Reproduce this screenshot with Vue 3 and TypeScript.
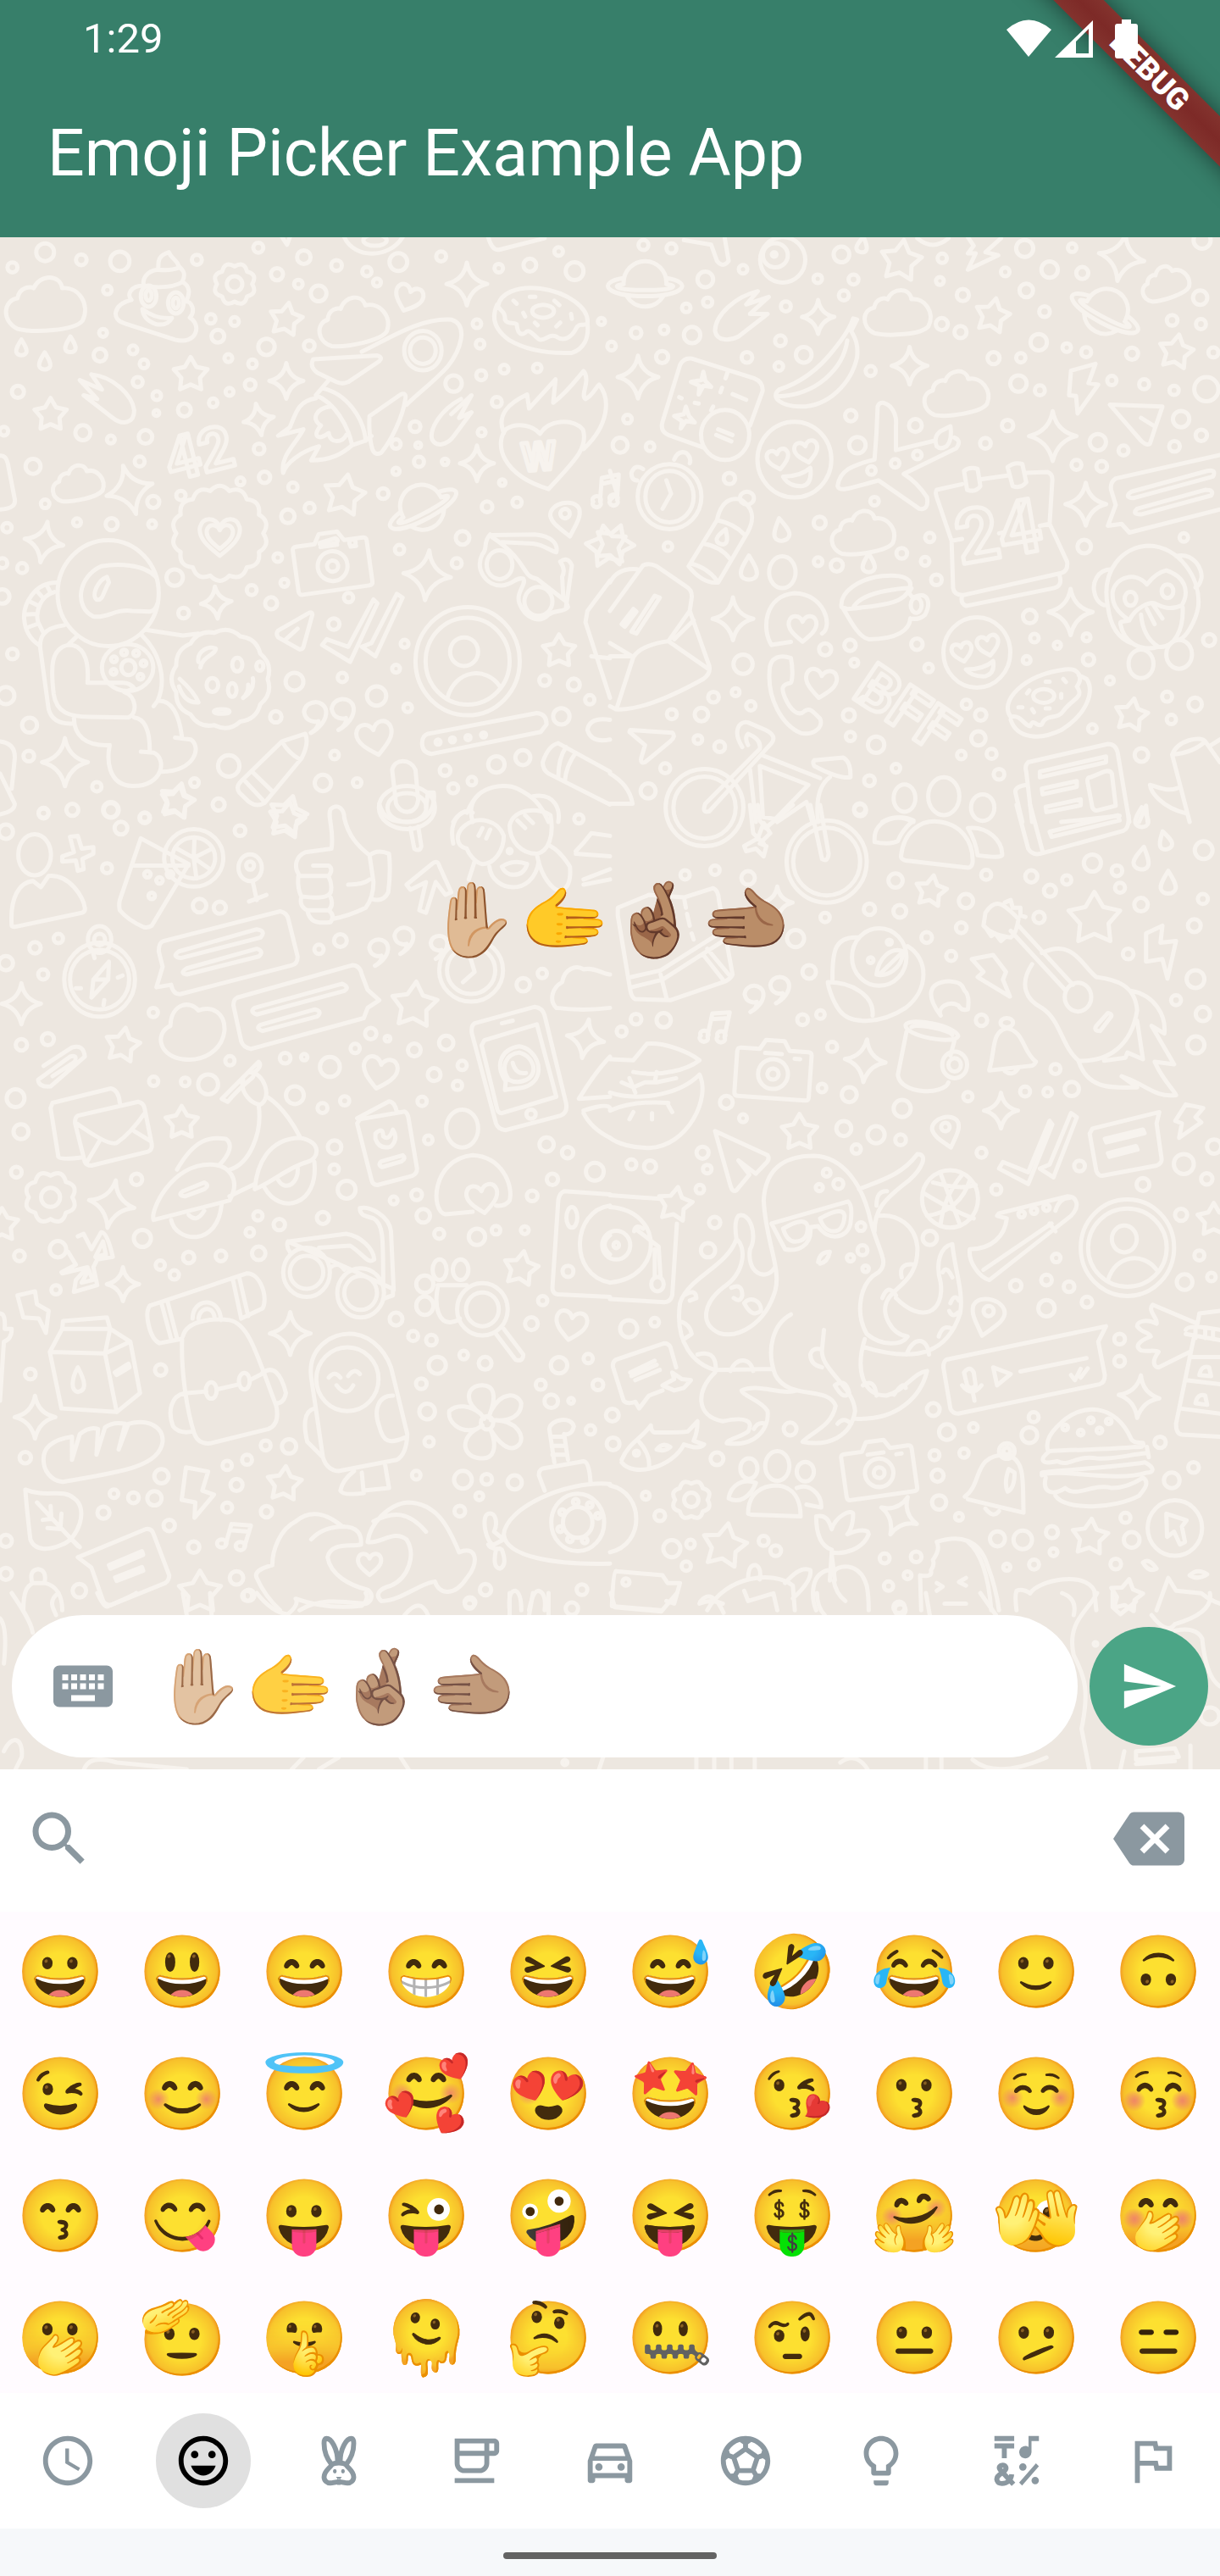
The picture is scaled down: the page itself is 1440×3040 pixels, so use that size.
<script setup lang="ts">
import { ref } from 'vue'

type Item = [shape: string, x: number, y: number, size: number, turn?: number]
interface Panel {
  frame: [x: number, y: number, sx: number, sy: number]
  dots: number[]
  ovals: number[]
  items: Item[]
  lines: string
}

const message = ref('✋🏼🫱🤞🏽🫲🏽')
const query = ref(message.value)
const activeTab = ref('Smileys')

const emojis: string[] = [
  '😀', '😃', '😄', '😁', '😆', '😅', '🤣', '😂', '🙂', '🙃',
  '😉', '😊', '😇', '🥰', '😍', '🤩', '😘', '😗', '☺️', '😚',
  '😙', '😋', '😛', '😜', '🤪', '😝', '🤑', '🤗', '🫣', '🤭',
  '🫢', '🫡', '🤫', '🫠', '🤔', '🤐', '🤨', '😐', '🫤', '😑',
]

const tabs: { name: string; fill?: string; stroke?: string }[] = [
  { name: 'Recent', fill: 'M12 2C6.48 2 2 6.48 2 12s4.48 10 10 10 10-4.48 10-10S17.52 2 12 2zm0 18c-4.42 0-8-3.58-8-8s3.58-8 8-8 8 3.58 8 8-3.58 8-8 8zM12.5 7H11v6l5.25 3.15.75-1.23-4.5-2.67z' },
  { name: 'Smileys', fill: 'M12 2C6.47 2 2 6.48 2 12s4.47 10 10 10 10-4.48 10-10S17.52 2 12 2zm0 18c-4.42 0-8-3.58-8-8s3.58-8 8-8 8 3.58 8 8-3.58 8-8 8zM12 18c2.28 0 4.22-1.66 5-4H7c.78 2.34 2.72 4 5 4zM7 9.5a1.5 1.5 0 1 1 3 0a1.5 1.5 0 1 1-3 0zM14 9.5a1.5 1.5 0 1 1 3 0a1.5 1.5 0 1 1-3 0z' },
  { name: 'Animals', fill: 'M9.6 16.2a.75.9 0 1 1 1.5 0a.75.9 0 1 1-1.5 0zM12.9 16.2a.75.9 0 1 1 1.5 0a.75.9 0 1 1-1.5 0zM10.8 18.5h2.4L12 20zM11.3 19.4h1.4v2.4h-1.4z', stroke: 'M9.1 13.6C7.3 11.4 6 8.2 6 5C6 3.6 6.4 3 7 3C8.9 3 11.5 7 11.5 12.5M14.9 13.6C16.7 11.4 18 8.2 18 5C18 3.6 17.6 3 17 3C15.1 3 12.5 7 12.5 12.5M8.9 13.9C8 15.2 6 16.3 6 18.6C6 20 7.2 21 8.5 21C9.7 21 10.6 20.5 12 20.5C13.4 20.5 14.3 21 15.5 21C16.8 21 18 20 18 18.6C18 16.3 16 15.2 15.1 13.9C14 12.5 10 12.5 8.9 13.9Z' },
  { name: 'Food', fill: 'M4 19h16v2H4zM20 3H4v10c0 2.21 1.79 4 4 4h6c2.21 0 4-1.79 4-4v-3h2c1.11 0 2-.89 2-2V5c0-1.11-.89-2-2-2zm-4 10c0 1.1-.9 2-2 2H8c-1.1 0-2-.9-2-2v-3h10v3zm0-5H6V5h10v3zm4 0h-2V5h2v3z' },
  { name: 'Travel', fill: 'M18.92 6.01C18.72 5.42 18.16 5 17.5 5h-11c-.66 0-1.21.42-1.42 1.01L3 12v8c0 .55.45 1 1 1h1c.55 0 1-.45 1-1v-1h12v1c0 .55.45 1 1 1h1c.55 0 1-.45 1-1v-8l-2.08-5.99zM6.85 7h10.29l1.08 3.11H5.77L6.85 7zM19 17H5v-5h14v5zM6 14.5a1.5 1.5 0 1 1 3 0a1.5 1.5 0 1 1-3 0zM15 14.5a1.5 1.5 0 1 1 3 0a1.5 1.5 0 1 1-3 0z' },
  { name: 'Activities', fill: 'M12 2C6.48 2 2 6.48 2 12s4.48 10 10 10 10-4.48 10-10S17.52 2 12 2zm1 3.3l1.35-.95c1.82.56 3.37 1.76 4.38 3.34l-.39 1.34-1.35.46L13 6.7V5.3zm-3.35-.95L11 5.3v1.4L7.01 9.49l-1.35-.46-.39-1.34c1.01-1.57 2.56-2.77 4.38-3.34zM7.08 17.11l-1.14.1C4.73 15.81 4 13.99 4 12c0-.12.01-.23.02-.35l1-.73 1.38.48 1.46 4.34-.78 1.37zm7.42 2.48c-.79.26-1.63.41-2.5.41s-1.71-.15-2.5-.41l-.69-1.49.64-1.1h5.11l.64 1.11-.7 1.48zM14.27 15H9.73l-1.35-4.02L12 8.44l3.63 2.54L14.27 15zm3.79 2.21l-1.14-.1-.79-1.37 1.46-4.34 1.39-.47 1 .73c.01.11.02.22.02.34 0 1.99-.73 3.81-1.94 5.21z' },
  { name: 'Objects', fill: 'M9 21c0 .5.4 1 1 1h4c.6 0 1-.5 1-1v-1H9v1zm3-19C8.1 2 5 5.1 5 9c0 2.4 1.2 4.5 3 5.7V17c0 .5.4 1 1 1h6c.6 0 1-.5 1-1v-2.3c1.8-1.3 3-3.4 3-5.7 0-3.9-3.1-7-7-7zm2.9 11.1l-.9.6V16h-4v-2.3l-.8-.6C7.8 12.2 7 10.6 7 9c0-2.8 2.2-5 5-5s5 2.2 5 5c0 1.6-.8 3.2-2.1 4.1z' },
  { name: 'Symbols', fill: 'M3 2h8v2H3zM6 11h2V7h3V5H3v2h3zM21 4h-3v4.6A2.5 2.5 0 1 1 16.8 6.4V2H21zM13 14.5a1.5 1.5 0 1 1 3 0a1.5 1.5 0 1 1-3 0zM18 20a1.5 1.5 0 1 1 3 0a1.5 1.5 0 1 1-3 0zM19.8 13l1.2 1.2-6.8 7.8-1.2-1.2z', stroke: 'M10.7 21.5L5.3 15.6C4.5 14.5 5.3 13.8 6.3 13.8C7.6 13.8 8.1 15 7.3 15.9L5 17.7C3 19.3 4.2 21.2 6 21.2C8.3 21.2 9.8 19.6 10 17.5' },
  { name: 'Flags', fill: 'M12.36 6l.08.39.32 1.61H18v6h-3.36l-.32-1.61-.08-.39H7V6h5.36M14 4H5v17h2v-7h5.6l.4 2h7V6h-5.6L14 4z' },
]

/** Closed outline that alternates between two radii. */
function ring(points: number, outer: number, inner: number): string {
  const step = Math.PI / points
  const parts: string[] = []
  for (let i = 0; i < points * 2; i++) {
    const r = i % 2 ? inner : outer
    const a = i * step - Math.PI / 2
    parts.push(`${(Math.cos(a) * r).toFixed(1)} ${(Math.sin(a) * r).toFixed(1)}`)
  }
  return `M${parts.join('L')}Z`
}

/** Circle with rounded bumps along its edge. */
function bumps(count: number, radius: number, bulge: number): string {
  const at = (i: number, r: number) => {
    const a = (i * 2 * Math.PI) / count
    return `${(Math.cos(a) * r).toFixed(1)} ${(Math.sin(a) * r).toFixed(1)}`
  }
  let d = `M${at(0, radius)}`
  for (let i = 0; i < count; i++) d += `Q${at(i + 0.5, bulge)} ${at(i + 1, radius)}`
  return d + 'Z'
}

function oval(r: number, ry = r): string {
  return `M${-r} 0a${r} ${ry} 0 1 1 ${r * 2} 0a${r} ${ry} 0 1 1 ${-r * 2} 0Z`
}

const shapes: Record<string, string> = {
  star: ring(5, 20, 11),
  spark: 'M0-21Q3-4 20 0Q4 4 0 21Q-4 4-20 0Q-3-4 0-21Z',
  heart: 'M0 18C-10 10-20 2-18-8C-15-18-4-17 0-8C4-17 15-18 18-8C20 2 10 10 0 18Z',
  cloud: 'M-14 12C-22 8-21-2-14-3C-13-9-7-9-6-8C-3-15 7-15 8-8C16-9 22 0 18 8C14 13-6 14-14 12Z',
  planet: 'M-14-2A14 14 0 0 1 14-2M-12 7A14 14 0 0 0 12 7M-14-5C-32-2-26 7 0 7S32-2 14-5M-14-1C-22 0-20 3 0 3S22 0 14-1',
  camera: 'M-18-10H-8L-5-15H5L8-10H18Q20-10 20-8V14Q20 16 18 16H-18Q-20 16-20 14V-8Q-20-10-18-10ZM-8 3A8 8 0 1 1 8 3A8 8 0 1 1-8 3M-3 3A3 3 0 1 1 3 3A3 3 0 1 1-3 3M-5-8H4M11-6H14',
  gear: bumps(8, 16, 23) + oval(7),
  drop: 'M0-18C8-5 12 2 11 8C9 18-9 18-11 8C-12 2-8-5 0-18Z',
  pin: 'M0 20C-10 8-16 2-16-6C-14-20 14-20 16-6C16 2 10 8 0 20ZM-5-5A5 5 0 1 1 5-5A5 5 0 1 1-5-5',
  quote: 'M-6 20C5 14 13 4 12-6C10-20-12-20-14-5C-12 8 0 7 3 6Q4 14-6 20Z',
  note: 'M-8 12L-6-14L14-18L12 10M-6-7L13-11M-16 14A5 4 0 1 1-8 14A5 4 0 1 1-16 14M4 12A5 4 0 1 1 12 12A5 4 0 1 1 4 12',
  badge: bumps(14, 19, 23),
  moon: bumps(11, 19, 22),
}

const panels: Panel[] = [
  {
    frame: [0, 270, 0.45918, 0.44643],
    dots: [32,102,14,116,62,25,209,82,15,308,86,27,276,162,12,265,275,11,257,334,18,342,320,12,370,357,12,354,405,14,403,441,12,402,487,8,46,431,17,213,539,21,285,557,11,374,550,19,10,535,12,85,628,21,359,615,14,116,727,12,394,722,17,18,790,13,198,776,11,287,781,17,391,781,11,465,705,13,506,82,14,542,238,13,603,245,12,560,284,18,685,312,23,587,342,11,649,357,12,643,412,15,590,431,11,548,460,12,474,479,18,666,582,15,680,657,16,618,668,11,753,683,13,740,760,19,796,738,14,664,50,14,712,120,17,767,146,12,781,75,19,819,171,22,865,97,15,943,113,13,969,142,11,1024,88,25,1134,73,14,1226,251,12,1234,305,12,1282,104,12,1362,96,18,1436,60,12,1477,112,25,1546,245,10,1166,409,23,1237,387,14,1296,371,12,1381,368,12,1277,458,14,1067,523,15,1018,569,13,1075,572,8,1077,616,14,1144,616,9,1018,641,10,1238,538,11,985,700,15,1291,671,9,1252,735,15,1329,723,13,1189,817,19,1174,884,14,1027,848,13,714,869,12,449,922,23,472,1016,15,57,897,14,6,884,14,6,972,20,647,955,14,697,990,17,731,936,11,896,975,13,858,1045,16,1040,1097,11,1018,1163,11,32,1124,15,15,1234,24,76,1312,21,74,1394,15,757,1197,25,880,1186,13,968,1235,27,1048,1266,12,709,1290,16,588,1420,30,860,1391,12,830,1465,23,918,1464,12,500,1464,12,562,1522,17,249,1475,13,186,1536,17,112,1546,14,285,1536,22,372,1556,13,1400,1194,15,1475,1205,17,1516,1245,13,1443,1289,23,1344,1398,21,1276,1416,23,1144,1432,15,1213,1460,12,1165,1479,14,795,309,15,1126,1357,7,1163,1351,7,1203,1345,7,1243,1338,7,319,1120,8,350,1122,8,369,1149,8,361,1184,8,293,1138,8,292,1171,8,906,830,9],
    ovals: [382,178,20,28,452,196,20,28,382,176,8,14,452,196,8,14,1396,218,28,17,1087,322,48,52,1087,322,33,35,1284,888,33,38,1384,985,36,38,278,963,130,140,328,1160,66,62,330,1160,18,20,610,1152,13,18,546,1206,15,18,597,1219,11,18,668,1156,9,12,570,1276,20,6,1202,1143,134,143,1202,1143,108,115,1193,1118,36,38,964,30,30,15],
    items: [['star',490,386,21],['star',130,492,20],['star',735,240,20,10],['star',885,705,25,10],['star',1437,1117,20],['star',455,1512,21,15],['star',740,1550,23,15],['star',1560,840,25,-10],['spark',1200,146,24],['spark',736,402,20],['spark',665,504,18,-10],['spark',1226,620,20],['spark',333,690,28,-15],['spark',113,828,23,10],['spark',556,988,18,-5],['spark',1098,916,28,5],['spark',167,1410,27],['heart',1050,182,18,20],['heart',964,1345,23,-12],['cloud',118,200,48],['cloud',908,245,42,-8],['cloud',200,672,31,-8],['gear',603,146,26],['planet',1087,740,36,-28],['badge',565,805,54],['heart',565,812,26],['heart',565,812,17],['camera',853,877,44,-8],['pin',1455,765,22,-12],['moon',568,1190,58],['quote',812,1288,20],['quote',883,1280,20],['note',1560,690,20],['drop',55,315,11],['drop',115,351,12],['drop',181,307,11]],
    lines: 'M434 62C395 75 412 100 405 108C375 112 365 135 370 150C335 150 325 175 338 188C290 200 285 240 320 250L450 293C505 308 520 255 488 235C505 215 490 190 478 192C490 170 488 150 468 140C482 115 465 105 460 100C455 80 440 80 434 62ZM372 152Q440 160 470 140M405 108Q440 112 462 102M366 212Q400 240 442 236Q430 258 400 252Q368 240 366 212ZM1280 205C1285 170 1330 150 1390 158C1460 168 1515 210 1510 250C1500 260 1490 245 1480 265C1470 285 1450 300 1430 285C1410 275 1400 300 1385 292C1370 280 1360 262 1350 275C1335 285 1330 270 1328 252C1318 245 1305 255 1298 240C1300 220 1285 215 1280 205ZM1278 200C1260 240 1275 270 1310 295C1360 325 1420 330 1470 328C1500 318 1515 290 1510 250M1320 190L1328 198M1362 180H1376M1425 190L1438 202M1345 222L1350 232M1440 248L1430 258M1468 225L1470 238M1375 248L1382 255M930 325C1000 290 1080 235 1160 240C1205 255 1185 320 1150 365C1120 400 1080 430 1045 465M805 345L970 335Q985 340 975 350L895 405Q880 412 865 405L815 380Q795 365 805 345ZM845 400L812 440M830 422C890 435 935 500 940 560L905 572C895 520 860 460 812 440M940 560L955 548M950 495L1030 438Q1045 432 1042 450C1035 500 1005 560 980 592Q965 600 958 585C950 560 948 520 950 495ZM812 448C765 455 760 490 745 525L715 547L780 530C760 570 720 600 728 645C735 620 770 590 820 575L800 612C850 612 880 595 905 572M850 470C810 475 800 505 825 520C800 550 820 560 845 540C850 570 880 565 890 545M235 385C290 390 340 440 345 480C345 515 315 520 290 500L215 440L250 450L205 400L262 425L235 385M1185 450C1130 480 1105 530 1110 555C1120 580 1150 570 1165 550L1212 485L1180 500L1212 440L1160 490M1410 688C1290 650 1270 570 1300 530C1330 510 1370 520 1388 542C1410 505 1470 500 1498 530C1515 580 1470 620 1410 688ZM1295 540C1275 490 1310 460 1355 438L1360 475L1428 398L1422 460C1460 430 1480 400 1500 376C1520 400 1490 440 1505 450C1525 440 1530 420 1540 412C1570 450 1565 520 1500 582M822 830L862 818Q872 822 865 830L830 838Q820 836 822 830ZM1265 810L1375 808C1420 812 1435 835 1430 855C1410 850 1400 835 1370 832L1290 828M1260 808C1240 830 1255 845 1240 860C1220 900 1250 945 1290 943C1320 940 1325 920 1345 925C1355 940 1325 960 1335 990C1350 1030 1385 1045 1410 1020C1430 1005 1450 1015 1460 1000L1455 985L1380 925C1340 920 1360 880 1265 815M1455 1000L1470 890Q1460 865 1440 880Q1455 900 1445 920L1448 975M400 920C370 885 300 885 260 892C200 920 190 1000 240 1025C280 1030 290 1005 340 1010L385 1012Q400 1010 405 990M275 920C250 930 235 970 248 980C265 985 265 960 280 935ZM145 935C90 935 60 990 62 1030C65 1070 85 1090 100 1100M140 960C105 970 90 1010 98 1040L110 1065M120 942L130 962M95 958L110 975M76 985L96 995M64 1020L92 1018M68 1055L95 1045M165 1048C110 1055 98 1080 105 1120L125 1270Q135 1310 185 1308M225 1200C230 1130 210 1100 175 1100C130 1110 130 1160 138 1230C145 1280 180 1290 230 1290L330 1292C355 1280 350 1235 320 1225L345 1215Q335 1200 315 1200ZM175 1100L195 1080M190 1292C190 1340 220 1368 282 1365C275 1400 275 1470 340 1473C420 1475 430 1400 395 1385L362 1382M385 1380C385 1320 370 1295 345 1292M415 1435C500 1435 520 1370 490 1350L450 1345M468 1345C460 1280 440 1245 405 1248L395 1262M365 1075C410 1120 430 1190 405 1248M375 1060L470 1075L510 1070M510 1145C505 1115 540 1100 555 1110C555 1125 520 1130 515 1160M462 1190Q500 1225 510 1252Q475 1255 460 1210M650 1188Q655 1220 625 1240Q640 1225 638 1205M795 1015L715 1062Q708 1070 715 1080L770 1112Q778 1112 780 1105L803 1020Q803 1012 795 1015ZM765 1057L735 1085M960 980L895 1105L840 1085L828 1100L900 1145L970 990ZM1020 965L955 1095L930 1105L965 1130L1035 975ZM1150 1240C1170 1165 1250 1155 1285 1210M1100 1335L1380 1280Q1405 1282 1405 1310L1390 1330L1110 1388Q1085 1385 1085 1360Q1085 1340 1100 1335ZM725 1355L785 1335Q795 1360 775 1400L680 1518Q660 1530 640 1515L615 1490Q605 1475 620 1460ZM725 1355Q740 1385 770 1402M650 1437L700 1487M630 1460L680 1515M1008 1430C1015 1400 1055 1400 1068 1430L1075 1510C1070 1550 1030 1550 1018 1520ZM975 1520C985 1560 1010 1568 1050 1568C1100 1568 1120 1530 1115 1490L1100 1490L1095 1530M1435 1360L1568 1435M1435 1360Q1410 1365 1395 1410Q1395 1430 1410 1440L1568 1522M1455 1370Q1435 1400 1435 1450M1480 1385Q1455 1420 1452 1460M1215 1568C1190 1480 1290 1460 1330 1480C1370 1500 1390 1520 1410 1568M1370 1500C1430 1490 1440 1540 1435 1568M1165 1568Q1185 1535 1210 1540M0 600Q15 598 20 620L38 715Q42 740 0 742M1568 930L1510 1010L1505 1040L1568 1240M1520 1130L1568 1135M885 22C910 80 1000 80 1035 22M1255 22Q1265 60 1285 55L1400 25M725 22L738 42L745 22M0 1355Q40 1360 38 1400L30 1480M0 1440L38 1520Q38 1540 0 1548M1568 1298Q1515 1290 1510 1325Q1520 1360 1568 1350',
  },
  {
    frame: [720, 270, 0.45918, 0.44643],
    dots: [86,43,14,158,52,14,342,107,12,245,134,22,251,194,13,196,209,12,139,267,12,67,275,15,211,281,23,134,339,17,352,340,15,4,310,12,45,503,12,26,572,21,103,576,12,307,660,16,452,205,14,438,296,15,434,364,12,498,333,22,534,132,12,595,68,22,626,134,14,601,176,14,670,376,14,619,494,16,636,572,23,785,520,18,539,777,17,535,880,12,583,890,17,750,858,15,822,816,13,810,879,12,680,720,12,839,928,15,854,78,13,848,138,11,907,175,17,853,252,17,901,273,17,986,342,17,1056,341,13,1050,409,23,1105,427,14,1102,300,23,1070,163,19,1117,219,15,1066,52,24,1188,50,12,1130,108,23,1214,117,17,1016,114,12,1174,314,12,1224,326,14,1342,330,17,1290,401,13,1373,411,14,1450,427,13,1445,242,15,1519,252,14,1517,182,20,1551,327,14,1533,424,34,1468,503,23,1520,546,16,1451,575,15,1320,586,14,1254,564,23,1199,624,14,1264,628,15,1022,520,16,965,567,15,1219,840,19,1475,816,12,149,840,12,342,1151,27,553,1112,17,617,1101,16,628,1147,11,789,1098,16,819,1161,12,1079,1025,19,1091,1082,12,1150,1101,10,1071,1140,11,1225,1080,11,1230,1139,16,1540,1087,17,1285,1194,11,1432,1237,14,1504,1257,19,1443,1297,13,1240,1321,12,266,1238,15,323,1225,11,362,1261,13,235,1284,19,159,1283,14,226,1350,12,282,1369,15,142,1426,14,98,1486,21,614,1286,17,618,1342,13,684,1364,23,916,1257,13,953,1285,16,947,1347,20,981,1388,14,903,1391,12,735,1426,12,1000,1442,15,667,1459,15,642,1534,16,1366,1391,19,1522,30,24,672,639,12,733,620,12,790,598,12],
    ovals: [444,82,58,60,425,70,32,32,422,68,6,6,296,545,62,66,474,610,95,100,153,708,82,86,153,708,62,68,352,712,18,17,1338,978,15,18,1433,958,15,18,1365,1150,32,38,1463,1125,33,38,443,908,34,42,787,995,14,20,943,1120,86,93,1115,1235,27,18,243,1530,100,102,243,1530,80,82,757,1505,28,36,858,1500,40,50,958,1530,30,35],
    items: [['star',748,85,25,8],['star',983,230,21,12],['star',1455,326,21,10],['star',1340,1286,20,10],['star',10,835,24,20],['spark',72,392,24],['spark',535,233,19],['spark',770,362,21],['spark',1138,548,28],['spark',1223,728,24],['spark',1184,1013,26],['spark',316,1031,24],['spark',1315,75,27,10],['cloud',740,222,40],['cloud',890,435,39,-5],['cloud',650,803,38,-5],['cloud',1427,143,29,-15],['heart',542,1200,20,8],['drop',440,797,16,-10],['drop',357,898,17],['drop',665,885,13],['drop',290,815,11,20],['drop',648,43,11,10],['planet',90,150,36],['planet',1273,222,36,28],['heart',432,608,14,-12],['heart',505,588,15,-12],['heart',905,1118,13,-12],['heart',972,1100,14,-12],['heart',495,1055,18]],
    lines: 'M380 165C320 180 270 230 270 270C275 300 310 295 330 285L405 225L360 225L408 180L350 200ZM190 30L260 42L275 85Q290 105 305 85L295 25M790 25Q830 60 870 25M920 22L935 45L920 65H940L920 108L998 70L965 62L1005 25M625 237Q615 270 575 320C530 380 480 410 435 425C410 445 440 470 490 470C560 470 620 410 635 340C640 300 625 280 620 270L635 240ZM610 295C600 370 530 440 430 443M360 520L392 430Q395 405 370 395L210 343Q190 340 180 360L135 510Q128 535 150 545L240 578M240 378L235 400L208 405L230 415L228 438L240 415L260 418L245 402ZM195 470L190 490L165 495L185 508L182 528L195 508L218 512L203 495ZM315 437L350 452M278 530L315 545M273 545L312 562M302 380L297 395M288 420L284 432M178 445L184 448M218 460L228 462M265 470L260 480M445 655Q490 655 515 632Q520 675 495 680Q460 682 445 655ZM145 665L157 700L135 740M165 610Q175 585 195 592Q210 605 205 620M85 635Q65 620 55 645Q55 665 70 665M275 770C285 720 310 710 335 715C365 735 375 760 355 800L278 935Q240 940 202 892ZM275 770Q320 780 345 808M240 832Q285 840 308 872M208 885Q250 895 275 930M688 470Q695 450 720 470Q738 490 735 520V585L835 560M680 610L685 540L688 470M680 610C620 625 590 640 585 680C590 695 605 690 690 665L795 740Q820 745 815 710Q790 670 755 648L890 580Q905 560 885 552M840 575Q830 550 850 535L875 522Q880 560 865 575Q850 585 840 575M840 690L905 675M955 662L1025 652M1070 645L1125 643Q1138 648 1137 665L1130 780L1175 880Q1178 905 1160 910L910 968Q885 970 882 950L878 825L840 710Q835 695 840 690M878 825L905 820M1000 805L1010 803M1105 785L1130 780M905 970Q900 990 915 997L1140 950Q1165 945 1155 915M910 640Q925 628 945 635L952 680Q940 698 918 690ZM1022 630Q1040 615 1060 622L1070 670Q1055 688 1035 680ZM1568 598L1300 660Q1285 670 1288 690L1300 730L1280 785L1315 780L1335 803L1568 742M1340 695L1535 640Q1560 635 1550 655L1345 712Q1320 710 1340 695ZM1355 740L1530 690Q1555 690 1545 705L1365 755Q1340 755 1355 740ZM1280 1000C1260 900 1320 840 1385 838C1460 840 1520 920 1512 1000C1505 1040 1480 1080 1465 1085M1340 1095C1300 1080 1285 1040 1280 1000M1290 900C1250 900 1240 940 1245 960C1250 990 1270 995 1272 995M1455 865C1500 855 1525 900 1520 925Q1515 945 1505 948M1380 940C1350 905 1300 920 1292 960C1290 990 1300 1010 1335 1035C1350 1000 1390 985 1400 990C1420 1000 1440 1010 1470 995C1490 960 1480 920 1430 903C1400 910 1385 935 1380 940ZM1335 1035C1320 1040 1310 1035 1312 1045C1320 1090 1360 1120 1410 1105C1450 1110 1475 1060 1472 1000M1395 992L1420 1030M1380 1005L1400 1045M1365 1020Q1370 1080 1410 1105M1185 375L1248 357L1230 408L1255 412L1202 488L1198 442L1180 440ZM1285 465L1420 470L1400 530L1388 568Q1380 575 1365 560ZM1365 500L1400 522M0 1010L85 890Q100 882 120 892L195 945Q212 955 210 975L205 1010L255 1155Q260 1175 240 1190C170 1230 80 1275 15 1270L0 1262M0 1130H60M0 1095L60 1132L18 1265M60 1132Q80 1100 150 1090L255 1165M150 1090L205 1010M165 1085L215 1035M115 970L55 1065L68 1070L128 975ZM60 1005L30 1045L38 1052L68 1012ZM0 935Q20 895 70 900M415 1100C390 1060 395 970 475 963C550 965 575 1050 545 1070M415 1100L465 1092M595 1000C590 960 640 925 700 918C750 912 780 925 770 950C760 985 720 995 610 1005ZM625 1002C640 970 700 955 765 950M600 1005C620 1040 640 1080 665 1085C740 1085 770 1060 772 1030M775 950L768 962L778 975C820 955 825 990 810 1020Q795 1035 772 1030M410 1170C410 1130 440 1125 465 1135C470 1160 470 1190 465 1200C440 1205 440 1215 450 1240C465 1275 485 1290 500 1275C515 1265 520 1275 540 1295C550 1320 520 1340 490 1333C440 1310 405 1240 410 1170ZM915 1165Q960 1165 985 1143Q990 1175 965 1183Q930 1185 915 1165ZM1030 1290C1000 1250 1060 1180 1170 1165C1210 1160 1215 1190 1200 1210C1220 1240 1190 1240 1165 1275C1150 1300 1120 1280 1110 1310C1095 1320 1090 1290 1080 1315C1060 1310 1060 1285 1030 1290ZM1030 1298C1045 1345 1100 1355 1160 1325C1230 1280 1245 1220 1225 1190L1205 1180M1120 1197H1130M1165 1190L1172 1198M1078 1220L1072 1228M1160 1230V1240M1050 1265H1060M1085 1270L1090 1278M1120 1268H1130M52 1325L160 1332Q170 1342 155 1355L90 1410Q78 1415 80 1400L90 1365L50 1330ZM395 1393L540 1452M340 1370C315 1330 330 1300 355 1305L400 1325Q430 1340 415 1360L255 1540Q235 1545 245 1520L385 1375Q390 1350 355 1335Q345 1345 355 1365M385 1420L510 1470L425 1560L393 1555ZM360 1430L375 1568M525 1405L600 1398Q620 1410 618 1450Q590 1455 525 1420Q520 1410 525 1405M565 1450Q525 1480 535 1568M430 1568L505 1515L520 1568M1075 1410L1280 1362Q1300 1362 1305 1385L1335 1568M1075 1410Q1065 1420 1070 1435L1085 1568M1070 1470Q1040 1475 1042 1490L1060 1568M1105 1435L1275 1395V1410L1105 1450ZM1110 1480L1200 1460V1475L1112 1495ZM1120 1528L1210 1508V1524L1122 1542ZM1235 1450Q1225 1450 1228 1465L1240 1530Q1245 1540 1255 1537L1300 1525L1290 1440Q1285 1430 1270 1435ZM1160 1568L1310 1552M1445 1390C1460 1350 1520 1340 1530 1355L1568 1410M1445 1390L1490 1568M1445 1390Q1500 1385 1530 1355M1545 1365L1568 1350M1480 1545C1420 1530 1390 1490 1388 1470C1410 1475 1430 1490 1460 1478M1360 1568L1378 1525L1382 1568M0 1440Q50 1470 58 1520H0M700 1568Q740 1545 780 1568M0 640L18 700L5 712',
  },
  {
    frame: [0, 950, 0.45918, 0.60606],
    dots: [112,15,14,15,52,20,311,45,18,372,25,15,285,10,20,617,50,15,275,123,14,513,196,19,565,200,17,90,278,16,150,260,13,15,308,20,111,330,14,820,281,13,875,264,18,394,404,13,123,456,17,55,467,16,40,571,25,54,636,21,591,498,13,733,493,15,782,491,9,848,510,28,953,445,16,913,474,13,996,455,8,1065,477,18,1147,463,20,1116,525,18,1188,507,13,1176,546,13,1345,350,19,1394,328,13,395,538,13,476,539,12,535,544,28,758,565,25,829,590,14,886,576,13,860,666,19,859,709,13,891,749,25,1101,652,12,1085,577,13,42,715,15,351,729,16,366,844,24,149,865,23,50,878,15,144,944,13,412,896,13,448,915,13,485,881,16,568,878,15,665,873,19,642,832,12,663,800,13,718,817,16,830,804,17,1012,770,11,1071,759,15,1088,800,19,1129,835,14,1226,841,23,1275,828,12,1349,828,11,1368,761,15,1405,661,20,1459,677,16,1529,714,25,1420,729,16,1018,1001,18,1395,965,13,1366,1010,18,1062,1034,14,1109,1042,15,1192,1071,12,1247,1087,18,1124,1091,24,1083,1127,15,1098,1181,22,1103,1240,13,1070,1305,12,1437,1091,23,1512,1078,13,1537,1129,15,1390,1129,14,1417,1161,19,1468,1160,8,413,1100,16,78,1108,15,65,1271,16,415,1307,20,397,1350,20,343,1349,15,293,1341,12,266,1378,17,435,1403,16,15,1433,17,15,1497,17,204,1530,19,498,1445,16,584,1368,14,608,1324,17,584,1286,13,635,1275,14,683,1247,14,743,1249,20,685,1376,16,608,1505,19,635,1540,14,1190,1314,25,1251,1313,15,1232,1346,11,1323,1319,20,1182,1375,15,1518,1217,13,1248,1528,16,1207,1556,13,1496,1528,15,1488,27,13,379,135,9,410,147,9,437,135,9,390,177,9,1480,1357,8,1516,1363,8,1537,1384,8,1445,1377,8,1440,1410,8,1465,1430,8,1503,1432,8],
    ovals: [89,97,42,40,498,103,76,56,498,103,55,40,643,122,30,26,643,118,10,8,256,340,91,72,256,340,76,58,256,262,30,26,256,262,14,11,1211,322,82,61,1211,322,62,46,1046,5,72,42,1046,5,50,28,1188,630,41,37,788,910,60,48,788,910,43,32,927,950,60,48,927,950,42,33,543,1140,14,16,628,1122,14,16,893,1118,80,62,1240,982,65,51,1240,982,42,33,1092,933,22,17,1130,905,18,20,1184,905,20,20,1092,975,22,18,1485,1397,68,56,1485,1397,38,30,1460,908,14,11,1470,803,14,20,1252,1203,16,13,570,1438,12,8,618,1443,12,8,1365,602,12,9,1310,90,5,4],
    items: [['star',315,468,21,10],['star',467,619,20],['star',1065,390,28,5],['star',1339,903,21,10],['star',731,1322,21,5],['star',514,1534,26],['star',737,30,22,10],['star',5,818,20],['star',455,-5,20,10],['spark',55,387,23],['spark',287,777,27,10],['spark',316,933,19],['spark',746,1029,24],['spark',90,1192,24],['spark',1505,455,22,10],['heart',976,520,22,12],['heart',1240,765,20,-8],['heart',950,1477,15],['heart',1468,1012,20,10],['gear',130,764,32],['quote',975,285,17],['quote',1040,262,17],['quote',1130,275,15]],
    lines: 'M30 235C25 180 50 150 85 148L105 160L125 138C180 135 215 180 218 200Q220 208 210 210L40 237Q32 238 30 235ZM362 65L485 115L390 235Q380 240 370 238Q330 225 308 205Q305 195 308 185ZM342 118H485M498 103L545 85M498 103L540 125M498 103L505 143M498 103L500 63M498 103L455 85M650 150L660 185M640 188L685 175M852 85C860 50 840 20 850 8C870 -5 885 10 885 25C895 60 920 80 950 98L960 150Q960 180 940 200Q900 215 855 222M852 85L785 92C760 100 755 120 768 135C765 145 765 165 775 178C770 190 775 200 790 205C795 225 810 232 850 228Q862 215 845 205M768 138H845Q858 125 845 118H805M775 178Q840 185 850 170Q855 155 845 140M790 205H845Q858 195 850 180M950 98Q970 85 1000 95Q1005 130 998 170Q985 190 955 183M895 155Q935 155 950 145M160 100L190 92L180 62L200 60L210 85L240 82V95L212 105L215 125L200 128L195 108L160 110ZM280 305L240 340L235 375L278 340ZM240 340L278 340M195 357H208M315 332L303 336M240 290L243 298M266 390L268 380M420 265L720 207Q740 210 742 225L765 295Q765 310 750 312L465 368Q445 370 440 350L402 355L418 315L408 285Q408 268 420 265ZM460 285L660 242Q685 245 670 258L465 298Q440 295 460 285ZM480 318L660 280Q680 285 665 295L480 330Q460 328 480 318ZM610 375L905 312Q925 312 930 330L945 360L975 380L945 395L935 415L645 475Q625 472 620 460L600 390Q600 378 610 375ZM655 395L880 348Q900 355 885 362L660 408Q640 402 655 395ZM670 428L810 398Q830 402 815 412L675 440Q655 435 670 428ZM438 430C440 385 490 380 510 400C545 390 580 405 577 440C570 480 520 500 470 495C410 490 395 445 438 430ZM1210 300L1220 325L1190 345M1055 45L1065 85Q1080 92 1083 80L1075 42M1045 155L1110 115Q1125 105 1130 120L1160 170L1145 175L1120 150L1095 210L1078 205L1095 150L1055 165ZM112 508L185 472Q215 465 218 490L130 548Q100 550 98 535L180 490Q200 485 192 500L135 528M135 580L285 552Q305 555 308 580M135 580L130 590L150 685Q155 692 212 686M200 605L355 578Q370 580 372 592L390 660Q392 672 380 675L235 702Q222 702 218 695L193 620Q192 608 200 605ZM197 620Q280 665 300 658Q335 640 372 600M222 697L255 655M388 655L345 635M570 572L665 500Q675 508 655 520L650 530Q610 555 585 578ZM625 535C615 560 650 585 670 583C700 570 680 520 640 520M665 585C675 640 640 700 590 710M690 570C730 590 760 630 770 645M455 710C500 650 540 645 580 650C600 660 590 680 565 700M395 808C385 790 440 700 540 700C590 700 620 730 590 770ZM590 762L655 738M655 748C660 700 690 650 770 648C830 655 820 690 790 695C740 705 700 735 655 748M440 808C450 850 560 865 570 775M680 745C720 800 820 780 808 695M485 798Q505 815 525 790M715 730C735 755 770 735 765 705M470 752L525 735Q540 740 525 748L475 762Q455 760 470 752ZM925 612L1040 597Q1048 600 1050 610L1072 708Q1072 718 1060 722L970 740Q958 740 955 730L918 620ZM918 610L1000 577Q1015 578 1020 598M980 694L1035 682Q1045 688 1032 694L982 705Q970 700 980 694ZM965 640Q985 625 985 645Q1000 655 1010 632Q1025 650 1005 665Q975 672 965 650ZM1145 797C1105 790 1110 690 1215 682C1290 685 1320 740 1310 770Q1300 782 1275 780M1145 797L1215 792M1220 425L1375 393Q1395 395 1400 410L1455 580Q1460 600 1440 605L1300 633Q1280 632 1275 620L1213 445Q1210 430 1220 425ZM1245 458L1380 427L1430 568L1290 600Q1280 600 1278 592L1238 468ZM1298 555L1300 538C1270 505 1290 475 1335 470C1380 475 1400 520 1370 540C1350 555 1320 550 1298 555ZM1308 535C1285 510 1300 485 1335 482C1365 488 1385 515 1360 532C1340 542 1320 540 1308 535ZM1318 502Q1325 525 1352 522M1290 425L1318 420M1430 395C1410 380 1420 355 1445 345C1450 320 1480 310 1500 320C1530 315 1550 330 1568 330M1430 395Q1500 402 1568 395M1568 490Q1530 520 1488 572L1568 568M1500 595Q1560 580 1568 590M1500 600Q1520 630 1568 648M740 850L890 835C930 840 960 865 962 885C945 895 935 875 900 858L820 862M740 850Q735 860 745 870M850 900Q870 888 885 905M740 850L895 902L1010 942V955Q995 958 985 962M1012 945L1005 830C1000 800 950 780 925 785C925 800 940 800 960 805C985 815 985 840 985 930M158 910L195 895L175 870M200 840L215 835L235 865L260 832Q275 830 290 880L250 885L240 900L250 935L190 948L195 925L225 900L160 912M245 880L265 850L272 875ZM210 930L228 905L238 925ZM385 975L635 912C670 912 690 960 675 980L620 1000M465 1040L410 1048C385 1040 370 990 385 975M470 1035C480 1000 560 1000 590 1003C640 1010 660 1070 710 1170Q720 1205 690 1215L540 1243Q510 1245 500 1225C480 1180 465 1100 468 1040M480 1145L530 1142M557 1138L615 1128M642 1120L680 1105M475 1145C440 1150 430 1180 445 1210Q460 1225 495 1220M675 1105Q715 1085 735 1145Q730 1165 710 1165M415 970L440 1040M430 965L455 1038M598 922L620 1000M615 920L638 995M495 1000C495 960 565 955 568 1003M510 1000C515 975 550 975 552 1000M45 955L90 947L95 972L125 985L118 1028L100 1000L60 998ZM160 1020L162 1005L275 998L283 1020ZM160 1020L128 1065L158 1175L300 1182L360 1145L335 1045L283 1020L270 1068L128 1065M270 1068L300 1182M270 1068L335 1045M200 1095C185 1115 180 1140 200 1143C225 1140 218 1120 200 1095ZM295 1105L330 1088L333 1095L300 1110ZM115 1290C100 1250 140 1235 185 1230L185 1275L205 1225Q230 1210 252 1215L248 1265L270 1212Q290 1200 322 1205L305 1255L330 1205C380 1195 420 1210 418 1240C410 1290 300 1300 160 1318C125 1315 115 1290 115 1290ZM65 1333C120 1350 160 1330 190 1350C230 1370 200 1430 160 1440C130 1450 90 1455 78 1430Q70 1380 65 1333ZM95 1358L200 1443M165 1415L205 1445M130 1365L132 1390L110 1392M158 1380L155 1410L122 1408M200 1465L375 1410Q390 1408 395 1420L435 1500Q435 1510 425 1515L285 1558Q270 1558 265 1550L235 1485ZM280 1480L365 1453L368 1460L284 1487ZM296 1504L365 1484L368 1491L300 1511ZM60 1568C60 1530 70 1520 85 1515H115C145 1520 160 1540 160 1568M82 1512Q75 1490 98 1488Q120 1490 115 1512M478 1290L535 1298L520 1335L550 1343L500 1388L502 1358L467 1353ZM595 1400L645 1403L628 1445M595 1400L580 1440M590 1412L638 1415M700 1480C700 1450 720 1410 760 1395C800 1370 840 1380 880 1405C920 1405 930 1420 928 1440C900 1445 850 1435 842 1465C850 1500 900 1520 945 1528C965 1540 950 1558 935 1555C870 1550 820 1545 770 1568M700 1480Q650 1490 660 1505Q680 1540 720 1568M800 1430Q830 1405 885 1405M945 1435C950 1400 1000 1360 1050 1358C1120 1360 1150 1400 1180 1455C1230 1440 1230 1480 1200 1505C1170 1540 1130 1540 1118 1512C1080 1515 1030 1550 980 1550C960 1535 980 1525 1005 1520C1050 1505 1070 1460 1045 1430C1010 1410 980 1440 945 1435M960 1395C1010 1375 1050 1375 1095 1415M800 1115C790 1060 850 1025 910 1030C960 1035 1000 1070 1010 1110L1047 1225Q1045 1265 1020 1275L870 1297Q840 1295 830 1270Q815 1190 800 1115M845 1115Q860 1100 875 1115M895 1112Q910 1095 925 1108M865 1130Q890 1155 908 1130M1010 1150C970 1150 960 1180 975 1210C985 1240 1000 1245 1040 1232M808 1175C780 1180 780 1210 790 1240L830 1270M910 1297Q880 1315 875 1335Q880 1345 935 1340L930 1300M990 1285L1000 1330L935 1335M1275 1030L1325 1080Q1345 1085 1345 1070L1295 1020M1125 940C1115 980 1130 1010 1160 1007Q1175 1005 1182 1000M1125 935L1200 935M1235 1185C1190 1160 1200 1130 1240 1130C1270 1130 1275 1150 1262 1180C1290 1140 1330 1145 1340 1165C1340 1190 1310 1200 1275 1198C1330 1200 1350 1230 1335 1245C1310 1265 1280 1240 1260 1215C1280 1250 1270 1275 1235 1272C1190 1270 1180 1235 1225 1215C1180 1225 1150 1200 1155 1180C1175 1165 1210 1170 1235 1185ZM1235 1185L1245 1195M1262 1180L1256 1193M1275 1198H1262M1225 1215L1240 1208M1400 1335L1385 1305Q1385 1295 1395 1292L1500 1278Q1515 1278 1518 1320M1568 1322C1450 1315 1300 1370 1295 1420C1300 1465 1430 1480 1568 1477M1425 1280L1412 1215C1415 1195 1470 1190 1475 1210C1470 1230 1450 1225 1450 1225L1460 1275M1415 1230H1450M1418 1248H1452M1420 1265H1456M1295 1430L1270 1440C1250 1440 1235 1385 1255 1380C1275 1375 1280 1400 1270 1415L1295 1430M1255 1440Q1260 1450 1285 1448M1275 1450Q1265 1485 1285 1487Q1305 1480 1290 1450M1568 758L1450 752Q1438 755 1435 770L1420 940Q1420 952 1435 953L1568 958M1568 780C1470 790 1460 915 1568 930M1568 838Q1540 855 1568 875M1165 75C1150 20 1200 5 1215 15M1200 15Q1215 -10 1230 -20M1200 85C1170 80 1170 55 1195 40C1230 20 1280 30 1295 60C1295 90 1270 115 1240 115C1220 112 1205 95 1200 85ZM1310 40C1320 5 1390 5 1415 20C1425 60 1410 90 1380 95C1340 95 1310 70 1310 40ZM1240 45L1230 60M1260 48L1250 65M1330 30L1350 45M1350 20L1370 35M1258 120C1265 170 1370 180 1385 110M1290 120Q1320 105 1355 115Q1345 140 1310 135Q1295 130 1290 120ZM1220 110L1205 145M1380 95C1390 140 1420 165 1440 168Q1470 160 1465 120Q1440 90 1415 80M1480 90Q1500 75 1520 55L1568 60M1480 95L1568 100M1500 145L1568 125M1500 155L1568 145M1310 1568Q1305 1530 1325 1530Q1340 1535 1340 1568M1360 1568Q1370 1530 1385 1530Q1405 1535 1400 1568M0 990Q15 990 12 1020H30Q30 1040 10 1045L0 1160',
  },
  {
    frame: [720, 950, 0.45918, 0.60606],
    dots: [643,10,17,193,136,13,270,127,13,355,142,19,734,147,20,667,203,16,745,207,18,915,187,20,967,136,14,903,239,15,553,219,13,814,258,15,877,294,14,477,260,24,512,325,19,541,408,12,495,418,15,30,441,14,67,417,15,138,419,20,299,579,18,342,610,11,571,471,14,545,551,12,615,564,21,751,591,24,601,630,21,684,642,24,747,652,15,633,670,13,955,419,16,1145,514,14,920,568,13,1067,558,14,1125,559,12,1187,553,20,1506,467,24,1524,407,20,1455,380,14,1505,339,25,1332,290,15,1502,235,18,1524,183,14,1365,194,19,1311,161,14,1303,128,15,1240,113,24,1131,167,17,1174,146,13,1083,139,17,1103,219,16,1526,88,25,238,677,17,250,709,12,231,748,12,269,813,16,252,867,20,55,700,14,103,704,17,955,677,14,1207,703,15,993,749,14,822,843,20,1147,882,12,1370,739,18,1475,699,28,1534,728,16,1468,798,17,1515,877,14,1477,929,22,1546,919,12,1553,665,20,1043,936,16,1122,925,15,1180,938,15,1226,968,15,1122,980,23,1310,1040,15,1310,1083,15,831,1177,18,866,1221,22,934,1212,12,1078,1227,22,1089,1192,14,910,1262,13,834,1266,14,842,1306,17,846,1358,20,897,1386,11,463,1215,18,275,1273,18,128,1384,15,92,1345,11,159,1448,24,207,1439,12,395,1433,14,426,1452,15,196,1482,13,48,1020,24,115,1007,12,6,1188,18,8,1244,18,1414,1241,16,1500,1290,15,1444,1315,22,1136,1416,17,1140,1455,11,1061,1431,26,996,1429,21,1090,1479,14,1020,1484,10,1325,1388,14,1341,1431,22,1300,1478,15,787,1464,15,706,1467,14,765,1500,11,716,1521,13,743,1562,16,557,716,11,538,745,10,587,738,14,645,821,12,649,867,14,618,882,10,657,903,9,1236,1198,8,1282,1200,8,1170,1212,8,1210,1222,8,1258,1218,8,1058,797,9,1090,790,9,1122,784,9,670,302,8,718,267,7,68,1262,7,41,1513,10],
    ovals: [557,110,103,80,557,110,86,66,692,296,70,56,886,506,32,26,886,506,16,13,1020,424,16,9,1203,374,34,28,16,857,36,28,16,857,7,6,122,933,16,14,874,767,72,56,1330,862,120,94,1330,862,101,76,1322,845,32,26,357,1292,22,20,430,1287,31,29,502,1298,22,19,1020,1258,20,15,1020,1258,9,7,1452,1408,70,54],
    items: [['star',825,168,19,10],['star',1245,222,32],['star',487,638,22],['star',167,778,21,10],['star',1234,1426,22,5],['star',294,1443,27,10],['star',1552,808,20],['star',1327,1540,20,10],['spark',656,498,24,5],['spark',1005,595,20],['spark',1360,1152,24,5],['spark',743,1384,23,25],['spark',430,190,18],['quote',372,375,17],['quote',438,358,17],['camera',420,513,44,4],['camera',690,1290,42,-8],['pin',865,635,20,-15],['pin',970,995,24,15],['gear',209,1353,24],['note',272,430,20,8],['drop',1367,25,14],['drop',1427,70,13,-15],['drop',1367,105,16,10],['drop',1435,152,16]],
    lines: 'M0 495L60 497L95 465C140 462 200 480 230 497C200 515 130 530 60 520M0 560C60 575 170 570 230 525C260 570 200 665 100 668C60 668 20 660 0 648M0 595Q60 575 150 580M30 540L60 550L90 540L120 540L170 532M50 612L60 598M108 612V600M160 598L150 585M50 532L65 560M120 520L115 540M20 200L100 175L190 180L265 162Q278 165 280 185L315 330Q310 340 290 345L155 380L65 378Q55 375 52 360L20 215ZM55 335L130 322L270 255M55 355L135 340L290 265M190 180L195 200M198 212L205 235M210 250L215 262M130 330L145 375M238 290L290 340M250 280L305 330M515 0L545 105Q560 112 562 95L540 0M360 0L368 55L395 75M380 0L385 30L400 45L470 0M345 80L380 65L395 35L412 55L385 75L402 80L395 100L375 85L350 90ZM680 65C680 30 740 15 780 30Q750 50 740 70Q720 78 680 72ZM748 100C755 50 800 30 840 32C900 35 935 70 932 112Q930 122 920 122L760 108Q748 106 748 100ZM920 45C970 40 1010 70 1008 98Q1005 104 945 98Q940 70 920 45M1045 0L1075 85Q1085 98 1105 95L1320 50Q1335 45 1333 20M1080 0L1112 90M1130 52L1305 20L1310 30L1135 62ZM640 258C580 255 570 280 572 345M765 275C820 300 820 360 760 395C700 425 620 430 590 400C570 380 560 350 560 345C620 345 680 370 675 410M685 330C690 300 720 275 755 285C750 320 710 335 685 330ZM695 328L750 288M850 410C810 370 820 345 870 343C910 345 905 355 912 362Q925 370 920 398Q905 402 895 390C870 380 840 395 850 410ZM760 428C770 412 890 430 895 450C885 468 755 450 760 428ZM775 432C790 425 875 438 880 448M762 442L740 525C745 565 860 565 870 540M885 460L875 488M975 515C990 480 980 440 1020 435C1065 440 1060 480 1095 500Q1090 508 1080 508L975 517M1015 518Q1035 530 1050 512M912 1347C960 1320 930 1265 1020 1265C1070 1275 1060 1320 1063 1378L920 1352M965 1370Q985 1390 1000 1375M1025 1293Q1012 1320 1022 1337Q1040 1330 1040 1300ZM930 300L985 292L1018 325L1010 340L1028 373L945 335L960 325ZM1378 250L1420 235L1415 268L1455 265L1433 338L1420 300L1378 305ZM1480 583L1525 590L1505 608L1520 618L1463 648L1470 620L1453 615ZM965 210C990 180 1010 190 1050 222Q1045 250 1030 258C1000 255 980 250 960 235ZM965 238L980 255L990 250L1005 265L1015 258M1015 190L1030 185L1035 200L1055 200L1055 215L1068 218M1030 245L1170 360M1050 235L1190 350M1085 310C1050 350 1070 380 1110 395C1160 420 1160 470 1205 498C1280 500 1340 470 1355 400C1350 350 1300 340 1250 335C1210 310 1190 260 1110 288M1340 362C1400 370 1430 410 1425 445L1392 430L1450 505L1400 500C1420 535 1450 555 1455 565C1400 570 1380 545 1315 528L1355 550C1290 550 1230 555 1205 500M1355 420L1370 495L1330 482L1325 492L1270 498M1250 430L1280 405Q1295 408 1285 415L1260 440Q1242 440 1250 430ZM270 635L405 682Q412 690 400 698L375 718L330 692L358 720L325 750Q315 755 310 742ZM1130 615L1075 715L1010 695L1000 708L1075 738L1137 622ZM1185 600L1130 700L1105 708L1140 725L1200 608ZM1240 630L1412 598L1405 620L1418 690Q1418 698 1405 702L1265 722Q1255 722 1250 712L1233 640ZM1272 650L1370 632L1374 639L1276 657ZM1280 678L1352 664L1356 671L1284 685ZM0 760L130 767M172 815L160 955Q155 968 140 968L0 962M0 783C140 790 140 920 0 930M65 825L125 860L130 920M115 865L115 920M62 830Q65 815 85 825M395 770C400 700 460 683 525 683C600 685 650 740 670 810C690 870 720 890 690 910C640 930 630 990 660 1030C700 1055 750 1052 765 1035C720 1030 700 990 710 970C720 940 795 930 790 860C785 820 740 795 690 800M395 770C400 850 440 900 425 945C400 1010 330 1040 280 1028C230 1010 240 970 290 940C350 910 350 860 325 845C300 900 200 920 180 970C165 1050 220 1090 270 1100L420 1098M325 845Q318 810 330 800C360 790 380 840 360 865C350 910 400 930 424 900M640 748C700 730 750 720 790 680C820 680 800 710 770 730C700 770 680 790 680 830M735 960C800 1010 860 990 850 930C835 890 850 860 880 855C885 900 910 950 900 990C870 1060 800 1090 650 1055M655 1040C630 1100 650 1150 710 1150C760 1140 780 1105 815 1102C800 1150 740 1200 630 1195M465 992C420 1010 400 1060 425 1110C460 1160 560 1130 580 1170C570 1210 520 1220 495 1240C560 1250 620 1230 630 1180C625 1130 540 1100 545 1060L550 1022M270 1105C220 1140 220 1190 290 1200C350 1190 370 1200 355 1220C340 1230 300 1235 300 1243C380 1250 410 1210 405 1180C390 1160 340 1150 338 1140C380 1125 440 1150 480 1140M190 955Q220 940 222 960L205 965M178 1005Q205 1010 210 1030L190 1040M225 1070Q270 1060 272 1095M310 1102C325 1075 360 1075 368 1102M312 940Q340 930 340 955Q335 970 318 960M345 970C360 955 390 965 388 985Q365 1000 345 970M515 1070Q520 1055 545 1060M515 1070Q515 1090 545 1095M578 1130Q605 1115 615 1145Q600 1160 578 1130M762 1070C780 1035 815 1035 820 1070M845 1035Q855 1010 880 1020M875 970Q885 950 897 965M872 985Q880 1000 895 988M700 960Q715 930 735 955M750 920Q740 890 785 895M685 780Q685 750 712 752M855 910Q865 895 880 920M650 1130Q680 1115 685 1150M730 1148Q755 1120 760 1135M370 1215Q380 1200 400 1205M585 1205Q600 1190 620 1205M535 890Q540 870 565 870Q560 890 540 893M415 815L612 772Q625 780 618 815C610 845 560 850 535 820L515 822C520 860 480 870 450 865ZM445 825Q500 800 508 820Q510 850 475 850Q455 850 445 825ZM540 805Q600 780 603 800Q600 830 575 830Q550 830 540 805ZM805 755Q880 790 935 805M830 735Q900 750 940 740M850 815Q860 760 905 720M815 800Q900 790 925 730M850 718L900 818M995 800L1020 805C1015 840 980 865 925 865C920 890 950 920 975 925L1185 800C1210 780 1200 762 1175 762L1000 795ZM960 905L1135 815M1145 790Q1155 765 1180 765M1130 815L1145 830M1280 925C1300 875 1370 870 1405 905M1510 1010L1395 973C1380 985 1410 1000 1405 1010C1380 1000 1355 1005 1355 1015C1370 1030 1385 1025 1390 1035C1355 1045 1350 1055 1365 1062C1385 1065 1400 1060 1410 1065C1390 1085 1400 1095 1410 1095L1490 1065M1510 1010L1515 990L1568 985M1480 1022Q1485 1010 1568 1022M1480 1030L1568 1042M1505 1018V1038M1530 1018V1038M1550 1020V1040M1500 1040L1455 1205Q1455 1225 1470 1226L1568 1230M1490 1075H1568M1480 1120L1568 1128M1465 1175L1568 1185M1515 1110Q1520 1090 1540 1095L1545 1112ZM1505 1165Q1510 1145 1530 1150L1535 1168ZM865 1080L1275 1015L1255 1045L1272 1110Q1272 1125 1258 1128L895 1185Q880 1185 875 1175L857 1095Q857 1083 865 1080ZM1055 1103L1225 1077M985 1095L1030 1108L995 1130ZM910 1105Q925 1090 935 1105L940 1130Q930 1140 918 1130ZM905 1130Q930 1155 955 1130M933 1145L937 1160M1185 1110L1195 1120L1210 1098M1210 1115L1228 1097M1125 1255C1120 1240 1130 1225 1150 1210C1210 1160 1300 1165 1340 1235Q1345 1242 1370 1242Q1375 1252 1350 1250C1290 1255 1200 1255 1130 1258C1100 1275 1110 1285 1150 1278C1180 1290 1200 1265 1250 1272C1300 1275 1330 1265 1380 1262M1380 1250L1385 1270M1110 1300C1150 1295 1300 1290 1375 1280C1400 1290 1400 1300 1380 1300C1300 1320 1150 1290 1110 1305ZM1120 1310C1110 1340 1140 1345 1170 1330C1200 1350 1240 1320 1290 1330C1320 1330 1350 1320 1370 1310C1390 1320 1370 1335 1360 1345C1300 1370 1170 1375 1145 1345M15 1080L140 1048Q150 1048 155 1055L170 1095M15 1080Q5 1085 8 1095L35 1160Q45 1168 65 1162L75 1175L100 1150L135 1140M52 1105L115 1082M55 1112L120 1090M65 1120L128 1100M135 1130L165 1118L160 1105L185 1118L208 1120L190 1135L165 1140ZM30 1275C50 1240 80 1235 105 1208Q105 1220 115 1222C160 1222 190 1222 200 1220L225 1200C225 1215 220 1230 215 1238L242 1245C230 1255 210 1250 190 1245C160 1290 60 1310 30 1280M75 1240Q105 1265 100 1292M120 1255Q135 1240 155 1250Q140 1260 120 1255M355 1380C355 1340 390 1325 430 1325C470 1328 490 1350 490 1385L365 1382ZM305 1350C310 1325 340 1310 375 1320C360 1350 330 1360 305 1350ZM480 1330C510 1320 545 1340 543 1368L505 1362M570 1450C530 1440 530 1400 530 1385C560 1380 565 1400 570 1410C580 1385 620 1370 625 1380C625 1410 610 1420 610 1420C640 1410 665 1410 665 1420C650 1450 600 1460 570 1455L565 1510M570 1460L578 1510M560 1490C510 1500 520 1550 530 1568M575 1495C580 1480 640 1470 660 1520C665 1540 665 1568 665 1568M575 1510Q580 1535 605 1550M15 1492L135 1500L148 1515L180 1515L165 1555L145 1550M15 1492Q8 1495 5 1560L130 1568M250 1568C300 1500 420 1490 470 1520L475 1568M355 1508Q355 1478 375 1480Q390 1485 385 1508M450 1515Q490 1480 515 1490Q520 1510 470 1545M230 1555Q260 1545 290 1555M345 1530L355 1550L420 1535L430 1568M840 1435C900 1420 950 1430 970 1480C985 1510 995 1540 1000 1568M840 1435Q850 1450 830 1470Q835 1480 825 1490Q830 1505 797 1500L800 1568M920 1435C960 1460 975 1520 980 1568M840 1515L855 1522L840 1530M915 1505L897 1513L915 1520M860 1555H915M1430 1380L1482 1393L1470 1405L1478 1435L1465 1440L1450 1415L1432 1425ZM1045 1568Q1040 1540 1045 1530Q1060 1525 1080 1535C1100 1510 1220 1490 1245 1530L1250 1568M0 1325C90 1340 90 1440 0 1455M1370 1475Q1385 1465 1405 1487Q1385 1495 1370 1475M1490 1500Q1510 1485 1535 1498Q1510 1510 1490 1500M1405 1568L1435 1505L1455 1530L1520 1535Q1545 1550 1568 1555',
  },
  {
    frame: [0, 1880, 0.91837, 0.33333],
    dots: [726,600,7,1408,180,5],
    ovals: [1555,435,12,30,604,33,7,18,735,55,8,22,320,8,7,20,1157,60,7,20],
    items: [],
    lines: 'M15 0C25 40 40 100 42 140M75 0C60 30 70 60 72 78M125 0Q135 60 140 45Q170 10 175 0M235 0L240 78M270 0L272 78M330 0Q350 70 370 75Q385 40 380 20Q420 60 465 45Q475 20 470 0M520 78Q540 10 550 78M655 78V0M685 0L680 78M705 0V78M785 0L790 50L850 65L870 0M900 30Q915 -20 930 70M1050 0Q1050 50 1060 78M1190 0L1195 78M1260 0L1280 78M1365 0Q1385 20 1380 78M1430 0V50L1440 75L1460 30M1480 78Q1500 150 1510 110Q1560 70 1555 0M1410 0C1400 60 1370 100 1380 220C1395 300 1400 350 1390 480L1400 624M5 560C15 500 30 510 28 580L20 624M108 624Q115 570 150 600L240 624M375 624L390 582M410 624L435 582M515 582L525 624M770 624L775 582M895 624V582M918 624V582M940 582V624M970 582V624M1080 600Q1100 560 1115 624M1190 582V624M1210 582V624M1250 590Q1280 660 1345 582M1445 560L1440 624M1530 540V624M1460 560L1510 550L1515 580L1460 590ZM1460 605L1510 595M1500 140Q1535 110 1545 160Q1550 300 1568 330M0 90Q10 120 5 250',
  },
]

interface Oval { cx: number; cy: number; rx: number; ry: number }

const ovals: Oval[] = panels.flatMap(({ frame: [x, y, sx, sy], dots, ovals: list }) => {
  const out: Oval[] = []
  for (let i = 0; i < dots.length; i += 3) {
    const r = dots[i + 2] * 0.42
    out.push({ cx: x + dots[i] * sx, cy: y + dots[i + 1] * sy, rx: r, ry: r })
  }
  for (let i = 0; i < list.length; i += 4) {
    out.push({ cx: x + list[i] * sx, cy: y + list[i + 1] * sy, rx: list[i + 2] * sx, ry: list[i + 3] * sy })
  }
  return out
})

const stamps = panels.flatMap(({ frame: [x, y, sx, sy], items }) =>
  items.map(([shape, ix, iy, size, turn = 0]) => ({
    d: shapes[shape],
    transform: `translate(${x + ix * sx} ${y + iy * sy}) rotate(${turn}) scale(${size / 20})`,
  })),
)

const drawings = panels.map(({ frame: [x, y, sx, sy], lines }) => ({
  d: lines,
  transform: `translate(${x} ${y}) scale(${sx} ${sy})`,
}))

function add(emoji: string) {
  query.value += emoji
}
function erase() {
  query.value = Array.from(query.value).slice(0, -1).join('')
}
function send() {
  message.value = query.value
}
</script>

<template>
  <div class="app">
    <header class="top">
      <div class="ribbon"><span>DEBUG</span></div>
      <div class="status">
        <span class="time">1:29</span>
        <svg class="signals" viewBox="0 0 156 48" aria-hidden="true">
          <path d="M0 13Q26-10 53 13L26 45Z" />
          <path fill-rule="evenodd" d="M102 2V46H57ZM97 12L82 27V41H97Z" />
          <path d="M136 1h11v5h5q3 0 3 3v35q0 3-3 3h-21q-3 0-3-3V9q0-3 3-3h5z" />
        </svg>
      </div>
      <h1>Emoji Picker Example App</h1>
    </header>

    <main class="chat">
      <svg class="doodles" viewBox="0 280 1440 1808" preserveAspectRatio="xMidYMin slice" aria-hidden="true">
        <ellipse v-for="(o, i) in ovals" :key="'o' + i" v-bind="o" />
        <path v-for="(s, i) in stamps" :key="'s' + i" :d="s.d" :transform="s.transform" />
        <path v-for="(s, i) in drawings" :key="'d' + i" :d="s.d" :transform="s.transform" />
        <text font-size="70" transform="translate(202 568) rotate(-14)">42</text>
        <text font-size="88" transform="translate(1134 666) rotate(-10)">24</text>
        <text font-size="46" transform="translate(617 556) rotate(-4)">W</text>
        <text font-size="72" transform="translate(1004 822) rotate(34)">BFF</text>
      </svg>
      <p class="message">{{ message }}</p>
      <form class="composer" @submit.prevent="send">
        <div class="field">
          <button type="button" class="icon" aria-label="Keyboard">
            <svg viewBox="0 0 24 24" class="i84"><path d="M20 5H4c-1.1 0-1.99.9-1.99 2L2 17c0 1.1.9 2 2 2h16c1.1 0 2-.9 2-2V7c0-1.1-.9-2-2-2zm-9 3h2v2h-2V8zm0 3h2v2h-2v-2zM8 8h2v2H8V8zm0 3h2v2H8v-2zm-1 2H5v-2h2v2zm0-3H5V8h2v2zm9 7H8v-2h8v2zm0-4h-2v-2h2v2zm0-3h-2V8h2v2zm3 3h-2v-2h2v2zm0-3h-2V8h2v2z" /></svg>
          </button>
          <input v-model="query" type="text" aria-label="Message">
        </div>
        <button type="submit" class="send" aria-label="Send">
          <svg viewBox="0 0 24 24" class="i70"><path d="M2.01 21L23 12 2.01 3 2 10l15 2-15 2z" /></svg>
        </button>
      </form>
    </main>

    <section class="picker" aria-label="Emoji picker">
      <div class="tools">
        <button type="button" class="icon" aria-label="Search">
          <svg viewBox="0 0 24 24" class="i84"><path d="M15.5 14h-.79l-.28-.27A6.471 6.471 0 0 0 16 9.5 6.5 6.5 0 1 0 9.5 16c1.61 0 3.09-.59 4.23-1.57l.27.28v.79l5 4.99L20.49 19l-4.99-5zm-6 0C7.01 14 5 11.99 5 9.5S7.01 5 9.5 5 14 7.01 14 9.5 11.99 14 9.5 14z" /></svg>
        </button>
        <button type="button" class="icon" aria-label="Delete" @click="erase">
          <svg viewBox="0 0 24 24" class="i84"><path d="M22 3H7c-.69 0-1.23.35-1.59.88L0 12l5.41 8.11c.36.53.9.89 1.59.89h15c1.1 0 2-.9 2-2V5c0-1.1-.9-2-2-2zm-3 12.59L17.59 17 14 13.41 10.41 17 9 15.59 12.59 12 9 8.41 10.41 7 14 10.59 17.59 7 19 8.41 15.41 12 19 15.59z" /></svg>
        </button>
      </div>
      <div class="grid">
        <button v-for="e in emojis" :key="e" type="button" @click="add(e)">{{ e }}</button>
      </div>
      <nav class="tabs">
        <button
          v-for="t in tabs"
          :key="t.name"
          type="button"
          :aria-label="t.name"
          :class="{ active: t.name === activeTab }"
          @click="activeTab = t.name"
        >
          <span class="bubble">
            <svg viewBox="0 0 24 24" class="i70">
              <path v-if="t.fill" fill-rule="evenodd" :d="t.fill" />
              <path v-if="t.stroke" class="outline" :d="t.stroke" />
            </svg>
          </span>
        </button>
      </nav>
    </section>

    <footer class="gesture"><span /></footer>
  </div>
</template>

<style>
body {
  margin: 0;
}
</style>

<style scoped>
.app {
  display: flex;
  flex-direction: column;
  min-height: 100vh;
  font-family: Roboto, "Noto Color Emoji", sans-serif;
}
button {
  display: flex;
  flex: none;
  align-items: center;
  justify-content: center;
  padding: 0;
  border: 0;
  background: none;
  font: inherit;
  color: #8b98a0;
  cursor: pointer;
}
svg {
  display: block;
  fill: currentColor;
}
.i84 {
  width: 84px;
  height: 84px;
}
.i70 {
  width: 70px;
  height: 70px;
}

.top {
  position: relative;
  overflow: hidden;
  height: 280px;
  background: #377f6a;
  color: #fff;
}
.status {
  position: relative;
  display: flex;
  align-items: center;
  justify-content: space-between;
  height: 92px;
  padding: 0 96px 0 98px;
}
.time {
  font-size: 49px;
  line-height: 56px;
}
.signals {
  width: 156px;
  height: 48px;
}
h1 {
  margin: 0;
  padding: 0 56px;
  font-size: 77px;
  font-weight: 400;
  line-height: 178px;
  white-space: nowrap;
}
.ribbon {
  position: absolute;
  top: 63px;
  right: -217px;
  width: 600px;
  height: 42px;
  transform: rotate(45deg);
  background: linear-gradient(#83332e, #7d2a27 50%, #83332e);
  box-shadow: 0 0 28px rgba(0, 0, 0, 0.5);
  text-align: center;
  font-size: 36px;
  font-weight: 900;
  line-height: 42px;
}

.chat {
  position: relative;
  display: flex;
  flex: 1;
  flex-direction: column;
  overflow: hidden;
  background: #ede7e0;
}
.doodles {
  position: absolute;
  inset: 0;
  width: 100%;
  height: 100%;
  fill: none;
  stroke: #f7f3ee;
  stroke-width: 5px;
  stroke-linecap: round;
  stroke-linejoin: round;
}
.doodles * {
  vector-effect: non-scaling-stroke;
}
.doodles text {
  font-weight: 700;
}
.message {
  position: relative;
  display: flex;
  flex: 1;
  align-items: center;
  justify-content: center;
  margin: 0;
  font-size: 86px;
  line-height: 100px;
}
.composer {
  position: relative;
  display: flex;
  align-items: center;
  gap: 14px;
  padding: 14px;
}
.field {
  display: flex;
  flex: 1;
  align-items: center;
  gap: 42px;
  min-width: 0;
  height: 168px;
  padding: 0 42px;
  box-sizing: border-box;
  border-radius: 84px;
  background: #fff;
}
.field input {
  flex: 1;
  min-width: 0;
  height: 112px;
  padding: 0;
  border: 0;
  outline: 0;
  background: none;
  font: inherit;
  font-size: 86px;
  color: rgba(0, 0, 0, 0.87);
}
.send {
  width: 140px;
  height: 140px;
  border-radius: 50%;
  background: #4ba586;
  color: #fff;
}

.tools {
  display: flex;
  align-items: center;
  justify-content: space-between;
  box-sizing: border-box;
  height: 168px;
  padding: 0 42px 4px 28px;
  background: #fff;
}
.grid {
  display: grid;
  grid-template-columns: repeat(10, 1fr);
  grid-auto-rows: 144px;
  height: 568px;
  overflow: hidden;
  background: #fffbff;
}
.grid button {
  font-size: 84px;
  line-height: 96px;
  color: #000;
}
.tabs {
  display: flex;
  height: 160px;
  background: #fff;
}
.tabs button {
  flex: 1;
}
.bubble {
  display: flex;
  align-items: center;
  justify-content: center;
  width: 112px;
  height: 112px;
  border-radius: 50%;
}
.active .bubble {
  background: #e0e0e0;
  color: #000;
}
.outline {
  fill: none;
  stroke: currentColor;
  stroke-width: 2;
  stroke-linejoin: round;
}
.gesture {
  display: flex;
  align-items: flex-end;
  justify-content: center;
  box-sizing: border-box;
  height: 56px;
  padding-bottom: 20px;
  background: #f6f8fa;
}
.gesture span {
  width: 252px;
  height: 8px;
  border-radius: 4px;
  background: #636363;
}
</style>
